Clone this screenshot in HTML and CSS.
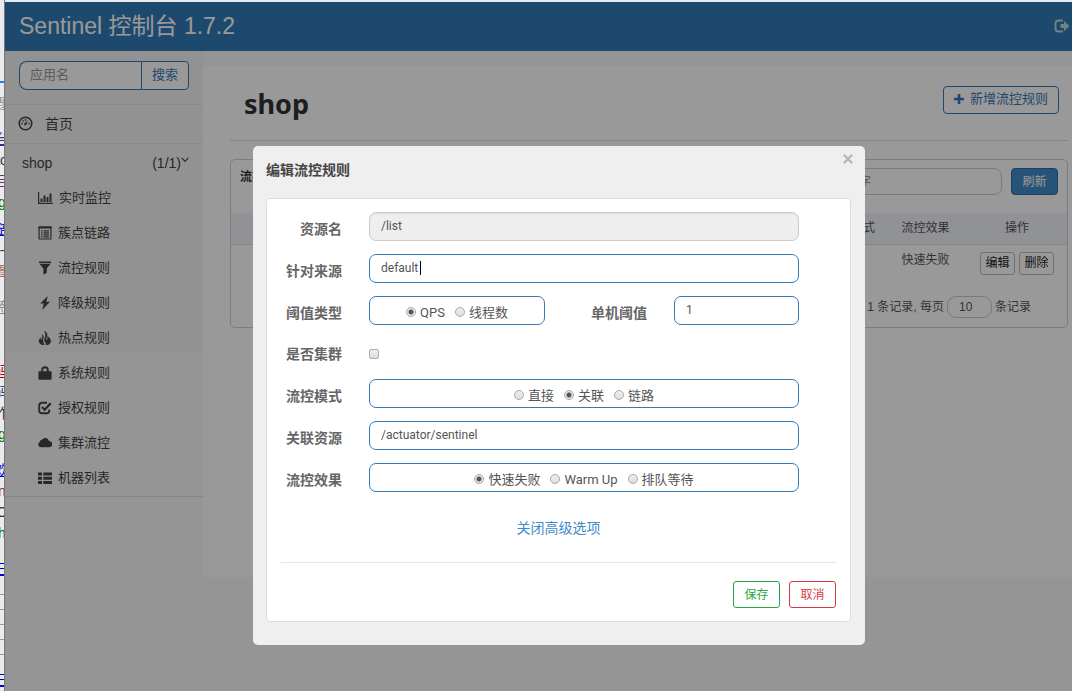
FILE: index.html
```html
<!DOCTYPE html>
<html lang="zh-CN">
<head>
<meta charset="utf-8">
<title>Sentinel 控制台</title>
<link rel="stylesheet" href="styles.css">
</head>
<body>
<div class="behind" aria-hidden="true">
  <div class="tabline"></div>
  <span class="gray s10">题</span>
  <span class="purple s16">台</span>
  <span>to</span>
  <span class="purple2">目</span>
  <span class="green">g</span>
  <span class="blue s6">链</span>
  <span>-</span>
  <span class="brown">图</span>
  <span class="gray s16">签</span>
  <span class="red s43">码</span>
  <span class="navy">码</span>
  <span>作</span>
  <span class="green">g</span>
  <span class="blue s16">欢</span>
  <span class="red2">n</span>
  <span>O</span>
  <span class="green">h</span>
  <span class="blue s16">日</span>
  <i></i><i></i><i></i><i></i><i></i>
  <span class="blue s16">日</span>
</div>
<div class="app">
  <header class="topbar">
    <h1>Sentinel 控制台 1.7.2</h1>
    <a href="#" class="logout" aria-label="退出"><svg viewBox="0 0 16 14" width="16" height="14"><path d="M9 1.500H4.500Q1.500 1.500 1.500 4.500V9.500Q1.500 12.500 4.500 12.500H9" fill="none" stroke="currentColor" stroke-width="2"/><path d="M6.500 5H10V2L15.500 7 10 12V9H6.500z" fill="currentColor"/></svg></a>
  </header>
  <div class="body">
    <nav class="sidebar">
      <form class="search">
        <input type="text" placeholder="应用名" aria-label="应用名">
        <button type="button">搜索</button>
      </form>
      <a class="home" href="#"><svg viewBox="0 0 16 16" width="15" height="15"><circle cx="8" cy="8" r="6.700" fill="none" stroke="currentColor" stroke-width="1.700"/><g fill="currentColor"><circle cx="4.300" cy="8" r=".9"/><circle cx="5.500" cy="5.300" r=".9"/><circle cx="8" cy="4.200" r=".9"/><circle cx="11.700" cy="8" r=".9"/><path d="M10.900 4.200 9 8.300A1.300 1.300 0 1 1 7.500 7.400z"/></g></svg>首页</a>
      <a class="appname" href="#"><span>shop</span><span class="count">(1/1)<svg viewBox="0 0 8 6" width="8" height="6"><path d="M.7.8 4 4.300 7.300.8" fill="none" stroke="currentColor" stroke-width="1.200"/></svg></span></a>
      <ul class="menu">
        <li><a href="#"><svg class="wide" viewBox="0 0 15 14"><path d="M.6 1V12.400H15" fill="none" stroke="currentColor" stroke-width="1.200"/><path d="M2.500 7.500h2V11h-2zM5.500 4.500h2V11h-2zM8.500 6h2v5h-2zM11.500 2.500h2V11h-2z" fill="currentColor"/></svg>实时监控</a></li>
        <li><a href="#"><svg viewBox="0 0 14 14"><path d="M1.100 1h11.800v12H1.100z" fill="none" stroke="currentColor" stroke-width="1.200"/><path d="M.5.4h13v2.200H.5zM3 4.300h1.500v1.200H3zM5.500 4.300H11v1.200H5.500zM3 6.300h1.500v1.200H3zM5.500 6.300H11v1.200H5.500zM3 8.300h1.500v1.200H3zM5.500 8.300H11v1.200H5.500zM3 10.300h1.500v1.200H3zM5.500 10.300H11v1.200H5.500z" fill="currentColor"/></svg>簇点链路</a></li>
        <li><a href="#"><svg viewBox="0 0 14 14"><path d="M1 .6h12v1.300H1zM1.500 2.700h11L8.800 7.500V11.700L5.400 13.700V7.500z" fill="currentColor"/></svg>流控规则</a></li>
        <li><a href="#"><svg viewBox="0 0 14 14"><path d="M9.800 0 2.200 7.600H5.800L4.200 14 12 5.800H8.300z" fill="currentColor"/></svg>降级规则</a></li>
        <li><a href="#"><svg viewBox="0 0 14 14"><path d="M6.500 0C10 2.500 9.300 4.500 8.300 6.800 7.700 8.300 8 9.500 8.700 9.200 9.600 8.700 9.800 7 9.500 5.500 12.500 7.200 13.500 10 12 12.200 11 13.500 9.500 14 8 14 8.500 12.500 7.500 11.700 6.700 10.500 6 9.200 7 7 7.300 5.500 7.700 3.500 7.300 1.500 6.500 0zM4.300 3.500C6 5.500 5.300 7 5 8.500 4.700 10.300 5.500 11.500 6 14 3.500 14 1 12.500 1 10 1 8.500 1.800 7.500 2.700 6.700 2.500 8 2.700 8.800 3.200 8.900 4.200 9 4.700 6 4.300 3.500z" fill="currentColor" stroke="currentColor" stroke-width=".5"/></svg>热点规则</a></li>
        <li><a href="#"><svg viewBox="0 0 14 14"><path d="M4.200 6V4A2.800 2.800 0 0 1 9.800 4V6" fill="none" stroke="currentColor" stroke-width="1.900"/><rect x=".4" y="5.300" width="13.200" height="8.500" rx=".8" fill="currentColor"/></svg>系统规则</a></li>
        <li><a href="#"><svg viewBox="0 0 14 14"><path d="M9 1.800H4Q1.200 1.800 1.200 4.500V9.500Q1.200 12.300 4 12.300H8.500Q11.300 12.300 11.300 9.500V8.500" fill="none" stroke="currentColor" stroke-width="1.900"/><path d="M4 6 6.700 8.700 12.700 2.200" fill="none" stroke="currentColor" stroke-width="2.200"/></svg>授权规则</a></li>
        <li><a href="#"><svg viewBox="0 0 14 14"><path d="M3 11.300A2.900 2.900 0 0 1 1.900 5.800 2.100 2.100 0 0 1 4 3.700 3.900 3.900 0 0 1 11 5.100 3.100 3.100 0 0 1 11.300 11.300z" fill="currentColor"/></svg>集群流控</a></li>
        <li><a href="#"><svg viewBox="0 0 14 14"><path d="M0 1.500h4v3H0zM5.300 1.500H14v3H5.300zM0 5.700h4v3H0zM5.300 5.700H14v3H5.300zM0 10h4v3H0zM5.300 10H14v3H5.300z" fill="currentColor"/></svg>机器列表</a></li>
      </ul>
    </nav>
    <main class="content">
      <div class="headrow">
        <h2>shop</h2>
        <button type="button" class="add"><svg viewBox="0 0 10 10" width="10" height="10"><path d="M5 0V10M0 5H10" stroke="currentColor" stroke-width="2.600"/></svg>新增流控规则</button>
      </div>
      <section class="card">
        <div class="cardhead">
          <strong>流控规则</strong>
          <input type="text" class="keyword" placeholder="关键字" aria-label="关键字">
          <button type="button" class="refresh">刷新</button>
        </div>
        <table>
          <thead><tr><th>资源名</th><th>来源应用</th><th>流控模式</th><th class="c-mode">阈值模式</th><th class="c-effect">流控效果</th><th class="c-op">操作</th></tr></thead>
          <tbody><tr><td>/list</td><td>default</td><td>关联</td><td>单机</td><td>快速失败</td><td class="ops"><button type="button">编辑</button><button type="button">删除</button></td></tr></tbody>
        </table>
        <div class="pager"><span>共 1 条记录, 每页</span><input type="text" value="10" aria-label="每页条数"><span>条记录</span></div>
      </section>
    </main>
  </div>
</div>
<div class="overlay">
  <div class="dialog" role="dialog" aria-labelledby="dlg-title">
    <button type="button" class="close" aria-label="关闭"><svg viewBox="0 0 10 10" width="10" height="10"><path d="M.8.8 9.200 9.200M9.200.8.8 9.200" stroke="currentColor" stroke-width="2.200"/></svg></button>
    <h3 id="dlg-title">编辑流控规则</h3>
    <form class="panel">
      <div class="row"><label for="res">资源名</label><input id="res" class="field" type="text" value="/list" disabled></div>
      <div class="row"><label for="origin">针对来源</label><div class="field typing"><input id="origin" type="text" value="default"><span class="caret"></span></div></div>
      <div class="row split">
        <span class="label">阈值类型</span>
        <div class="field radios"><label><input type="radio" name="type" checked>QPS</label><label><input type="radio" name="type">线程数</label></div>
        <label for="limit">单机阈值</label><input id="limit" class="field" type="text" value="1">
      </div>
      <div class="row check"><label for="cluster">是否集群</label><input id="cluster" type="checkbox"></div>
      <div class="row"><span class="label">流控模式</span><div class="field radios"><label><input type="radio" name="mode">直接</label><label><input type="radio" name="mode" checked>关联</label><label><input type="radio" name="mode">链路</label></div></div>
      <div class="row"><label for="ref">关联资源</label><input id="ref" class="field" type="text" value="/actuator/sentinel"></div>
      <div class="row"><span class="label">流控效果</span><div class="field radios"><label><input type="radio" name="effect" checked>快速失败</label><label><input type="radio" name="effect">Warm Up</label><label><input type="radio" name="effect">排队等待</label></div></div>
      <div class="advanced"><a href="#">关闭高级选项</a></div>
      <div class="actions"><button type="button" class="save">保存</button><button type="button" class="cancel">取消</button></div>
    </form>
  </div>
</div>
</body>
</html>
```
FILE: styles.css
```css
* { box-sizing: border-box; }
body {
  margin: 0;
  display: flex;
  min-height: 100vh;
  overflow: hidden;
  background: #e9ecf2;
  color: #555;
  font: 12px/20px "Liberation Sans", "Noto Sans CJK SC", sans-serif;
}
input, button { font: inherit; color: inherit; margin: 0; }
button { cursor: pointer; padding: 0; }
a { color: inherit; text-decoration: none; }
h1, h2, h3, ul { margin: 0; padding: 0; }

/* Edge of the window underneath */
.behind {
  width: 5px;
  height: 100vh;
  overflow: hidden;
  display: flex;
  flex-direction: column;
  align-items: center;
  border-right: 1px solid #777;
  background: #e9ebee;
  color: #333;
  font-size: 14px;
  line-height: 21px;
}
.behind > * { flex: none; }
.behind span { height: 21px; }
.tabline { width: 100%; height: 2px; margin-top: 81px; background: #2b7de9; }
.behind .s6 { margin-top: 6px; }
.behind .s10 { margin-top: 10px; }
.behind .s16 { margin-top: 15px; }
.behind .s43 { margin-top: 43px; }
.behind .gray { color: #888; }
.behind .purple { color: #551a8b; text-decoration: underline; }
.behind .purple2 { color: #703070; }
.behind .green { color: #070; }
.behind .blue { color: #00c; text-decoration: underline; }
.behind .brown { color: #a65; }
.behind .navy { color: #336; }
.behind .red { color: #b00; text-decoration: underline; }
.behind .red2 { color: #822; }
.behind i { width: 100%; height: 15px; border-bottom: 1px solid #999; }

.app {
  flex: 1;
  min-width: 0;
  margin-top: 2px;
  background: #f8f8f8;
}
.topbar {
  display: flex;
  align-items: center;
  justify-content: space-between;
  height: 49px;
  padding: 0 2px 2px 14px;
  background: #337ab7;
  color: #fff;
}
.topbar h1 { font-size: 23px; line-height: 36px; font-weight: 400; }
.logout { display: flex; color: #b5e0cc; }
.body { display: flex; align-items: flex-start; }

.sidebar { width: 198px; background: linear-gradient(#f4f4f4 302px, #f8f8f8 302px); }
.search { display: flex; padding: 10px 14px 14px; }
.search input {
  flex: 1;
  min-width: 0;
  height: 29px;
  padding: 0 10px 2px;
  border: 1px solid #337ab7;
  border-right: 0;
  border-radius: 8px 0 0 8px;
  background: #fff;
  font-size: 13px;
}
.search input::placeholder { color: #999; }
.search button {
  width: 48px;
  padding-bottom: 2px;
  border: 1px solid #337ab7;
  border-radius: 0 4px 4px 0;
  background: #fff;
  color: #337ab7;
  font-size: 13px;
}
.home, .appname {
  display: flex;
  align-items: center;
  border-top: 1px solid #e4e4e4;
  color: #444;
  font-size: 14px;
}
.home { gap: 12px; height: 39px; padding: 0 0 1px 13px; }
.appname { justify-content: space-between; height: 38px; padding: 0 14px 0 17px; }
.count { display: flex; align-items: center; }
.count svg { margin-bottom: 6px; }
.menu { list-style: none; border-bottom: 1px solid #e0e0e0; }
.menu a {
  display: flex;
  align-items: center;
  gap: 6px;
  height: 35px;
  padding: 0 0 2px 33px;
  color: #444;
  font-size: 13px;
}
.menu svg { width: 14px; height: 14px; }
.menu .wide { width: 15px; }

.content {
  flex: 1;
  min-width: 0;
  min-height: 511px;
  margin-top: 15px;
  padding: 0 4px 0 27px;
  background: #fff;
}
.headrow {
  display: flex;
  align-items: center;
  justify-content: space-between;
  height: 75px;
  margin-bottom: 18px;
  padding: 0 9px 6px 14px;
  border-bottom: 1px solid #ddd;
}
.headrow h2 { color: #333; font: 700 27px/40px "Noto Sans", sans-serif; padding-top: 8px; }
.add {
  display: flex;
  align-items: center;
  justify-content: center;
  gap: 6px;
  width: 116px;
  height: 28px;
  padding-bottom: 2px;
  border: 1px solid #337ab7;
  border-radius: 4px;
  background: #fff;
  color: #337ab7;
  font-size: 13px;
}
.card { border: 1px solid #d0d0d0; border-radius: 5px; }
.cardhead {
  display: flex;
  align-items: flex-start;
  gap: 9px;
  height: 53px;
  padding: 8px 9px 0;
}
.cardhead strong { margin-right: auto; line-height: 18px; color: #333; }
.keyword {
  width: 179px;
  height: 27px;
  padding: 0 11px;
  border: 1px solid #ccc;
  border-radius: 8px;
}
.keyword::placeholder { color: #888; }
.refresh {
  width: 47px;
  height: 27px;
  border: 1px solid #2e6da4;
  border-radius: 4px;
  background: #428bca;
  color: #fff;
}
table { width: 100%; border-collapse: collapse; table-layout: fixed; text-align: center; }
th {
  height: 31px;
  padding: 0;
  border-bottom: 1px solid #ddd;
  background: #f0f3f8;
  font-weight: 400;
}
td { height: 42px; padding: 5px 0 0; vertical-align: top; }
.c-mode { width: 66px; }
.c-effect { width: 83px; }
.c-op { width: 100px; }
.ops { padding-top: 7px; }
.ops button {
  width: 35px;
  height: 23px;
  border: 1px solid #bbb;
  border-radius: 3px;
  background: #fff;
  color: #222;
}
.ops button + button { margin-left: 4px; }
.pager {
  display: flex;
  align-items: center;
  justify-content: flex-end;
  gap: 3px;
  height: 41px;
  padding-right: 36px;
}
.pager input {
  width: 45px;
  height: 22px;
  padding: 0 11px;
  border: 1px solid #ccc;
  border-radius: 9px;
  background: #fff;
}

.overlay {
  position: fixed;
  inset: 2px 0 0 5px;
  display: flex;
  justify-content: center;
  align-items: flex-start;
  padding: 144px 0 0 41px;
  background: rgba(0, 0, 0, .4);
}
.dialog {
  position: relative;
  width: 612px;
  padding: 13px 14px 23px 13px;
  border-radius: 5px;
  background: #efefef;
}
.dialog h3 { margin-bottom: 17px; font-size: 14px; line-height: 22px; color: #444; }
.close {
  position: absolute;
  top: 8px;
  right: 12px;
  display: flex;
  border: 0;
  background: none;
  color: #b5b5b5;
}
.panel {
  padding: 13px 14px;
  border: 1px solid #ddd;
  border-radius: 4px;
  background: #fff;
}
.row {
  display: grid;
  grid-template-columns: 61px 1fr;
  column-gap: 27px;
  align-items: center;
  height: 29px;
  margin-bottom: 13px;
  padding-right: 37px;
}
.split { grid-template-columns: 61px 176px 1fr 125px; }
.check { height: 28px; }
.row > label, .label {
  padding-top: 4px;
  font-size: 14px;
  line-height: 20px;
  font-weight: 700;
  text-align: right;
  color: #666;
}
.field {
  width: 100%;
  height: 29px;
  padding: 0 11px 1px;
  border: 1px solid #337ab7;
  border-radius: 7px;
  background: #fff;
  color: #555;
  font: 12px/20px Roboto, "Noto Sans CJK SC", sans-serif;
}
.field:disabled {
  border-color: #ccc;
  background: #eee;
  box-shadow: inset 0 1px 1px rgba(0, 0, 0, .08);
}
.typing { display: flex; align-items: center; }
.typing input {
  width: 39px;
  padding: 0;
  border: 0;
  outline: 0;
  background: none;
}
.caret { width: 1px; height: 14px; background: #000; }
.radios {
  display: flex;
  align-items: center;
  justify-content: center;
  gap: 10px;
  padding: 4px 0 0;
  font-size: 13px;
}
.radios label { display: flex; align-items: center; gap: 4px; }
.radios input { margin-bottom: 2px; }
input[type="radio"], input[type="checkbox"] {
  appearance: none;
  width: 10px;
  height: 10px;
  border: 1px solid #aaa;
  border-radius: 50%;
  background: linear-gradient(#eee, #ddd);
}
input[type="radio"]:checked { background: radial-gradient(circle, #555 2px, #e6e6e6 3px); }
input[type="checkbox"] { border-radius: 2px; }
.row > input[type="checkbox"] { margin-top: 4px; }
.advanced {
  display: flex;
  justify-content: center;
  padding: 13px 0 24px;
  border-bottom: 1px solid #e5e5e5;
  font-size: 14px;
  color: #428bca;
}
.actions { display: flex; justify-content: flex-end; gap: 9px; padding-top: 18px; }
.actions button { width: 47px; height: 27px; border: 1px solid; border-radius: 3px; background: #fff; }
.save { color: #28a745; }
.cancel { color: #dc3545; }
```
